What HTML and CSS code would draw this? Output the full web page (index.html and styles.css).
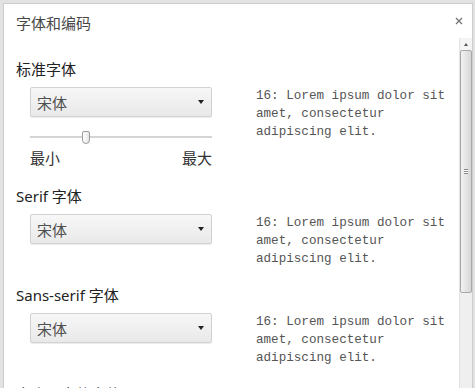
FILE: index.html
```html
<!DOCTYPE html>
<html lang="zh-CN">
<head>
    <meta charset="UTF-8">
    <title>字体和编码</title>
    <link rel="stylesheet" href="styles.css">
</head>
<body>
  <div class="dialog">
    <div class="header">
      <h1 class="title">字体和编码</h1>
      <svg class="close" width="8" height="8" viewBox="0 0 8 8">
        <path d="M1 1 L7 7 M7 1 L1 7" stroke="#777" stroke-width="1.4"/>
      </svg>
    </div>
    <div class="body">
      <div class="content">
        <div class="section">
          <h2 class="label">标准字体</h2>
          <div class="row">
            <div class="controls">
              <div class="select"><span>宋体</span><span class="arrow"></span></div>
              <div class="slider">
                <div class="track"></div>
                <div class="thumb"></div>
              </div>
              <div class="range"><span>最小</span><span>最大</span></div>
            </div>
            <p class="sample">16: Lorem ipsum dolor sit amet, consectetur adipiscing elit.</p>
          </div>
        </div>
        <div class="section">
          <h2 class="label">Serif 字体</h2>
          <div class="row">
            <div class="controls">
              <div class="select"><span>宋体</span><span class="arrow"></span></div>
            </div>
            <p class="sample">16: Lorem ipsum dolor sit amet, consectetur adipiscing elit.</p>
          </div>
        </div>
        <div class="section">
          <h2 class="label">Sans-serif 字体</h2>
          <div class="row">
            <div class="controls">
              <div class="select"><span>宋体</span><span class="arrow"></span></div>
            </div>
            <p class="sample">16: Lorem ipsum dolor sit amet, consectetur adipiscing elit.</p>
          </div>
        </div>
        <div class="section">
          <h2 class="label">宽度固定的字体</h2>
        </div>
      </div>
      <div class="scrollbar">
        <div class="sb-up"><span class="sb-arrow"></span></div>
        <div class="sb-thumb"><span class="grip"></span></div>
        <div class="sb-track"></div>
      </div>
    </div>
  </div>
</body>
</html>
```

FILE: styles.css
```css
html, body {
    margin: 0;
    height: 100%;
    overflow: hidden;
}
body {
    background-color: #e2e2e2;
    font-family: "Noto Sans", "Noto Sans CJK SC", sans-serif;
    color: #333;
}
.dialog {
    box-sizing: border-box;
    margin: 3px 2px 0 3px;
    height: 388px;
    background-color: #fff;
    border: 1px solid #cdcdcd;
    border-bottom: none;
    display: flex;
    flex-direction: column;
}
.header {
    height: 34px;
    box-sizing: border-box;
    padding: 9px 9px 0 12px;
    display: flex;
    justify-content: space-between;
    align-items: flex-start;
}
.title {
    margin: 0;
    font-size: 15px;
    line-height: 20px;
    font-weight: normal;
    color: #484848;
    font-family: "Noto Sans CJK SC", sans-serif;
}
.close {
    margin-top: 4px;
}
.body {
    flex: 1;
    display: flex;
    overflow: hidden;
}
.content {
    flex: 1;
    padding: 21px 0 0 12px;
    overflow: hidden;
}
.section {
    margin-bottom: 17px;
}
.label {
    margin: 0 0 8px 0;
    font-size: 15px;
    line-height: 20px;
    font-weight: normal;
    color: #222;
}
.row {
    display: flex;
    padding-left: 14px;
    gap: 44px;
}
.controls {
    width: 182px;
}
.select {
    box-sizing: border-box;
    height: 30px;
    border: 1px solid #d2d2d2;
    border-radius: 2px;
    background: linear-gradient(#f7f7f7, #e9e9e9);
    box-shadow: 0 1px 1px rgba(0, 0, 0, 0.08);
    display: flex;
    align-items: center;
    justify-content: space-between;
    padding: 0 7px 0 6px;
    font-family: "Noto Sans CJK SC", sans-serif;
    font-size: 15px;
    color: #505050;
}
.arrow {
    width: 0;
    height: 0;
    border-left: 3px solid transparent;
    border-right: 3px solid transparent;
    border-top: 4px solid #222;
}
.slider {
    position: relative;
    height: 13px;
    margin-top: 14px;
}
.track {
    position: absolute;
    left: 0;
    right: 0;
    top: 5px;
    height: 2px;
    background-color: #d4d4d4;
}
.thumb {
    position: absolute;
    left: 52px;
    top: 0;
    width: 6px;
    height: 11px;
    border: 1px solid #9a9a9a;
    border-radius: 2px 2px 4px 4px;
    background: linear-gradient(to right, #fff, #e4e4e4);
}
.range {
    display: flex;
    justify-content: space-between;
    margin: 5px 0 2px 0;
    font-family: "Noto Sans CJK SC", sans-serif;
    font-size: 15px;
    line-height: 18px;
    color: #333;
}
.sample {
    margin: 0;
    width: 200px;
    font-family: "Liberation Mono", monospace;
    font-size: 12.6px;
    line-height: 18px;
    color: #555;
}
.scrollbar {
    width: 12px;
    display: flex;
    flex-direction: column;
    background-color: #efefef;
    border-left: 1px solid #e2e2e2;
}
.sb-up {
    height: 12px;
    display: flex;
    align-items: center;
    justify-content: center;
    background-color: #f4f4f4;
}
.sb-arrow {
    width: 0;
    height: 0;
    border-left: 2px solid transparent;
    border-right: 2px solid transparent;
    border-bottom: 3px solid #555;
}
.sb-thumb {
    box-sizing: border-box;
    height: 243px;
    border: 1px solid #a8a8a8;
    border-radius: 2px;
    background: linear-gradient(to right, #f2f2f2, #d6d6d6);
    display: flex;
    align-items: center;
    justify-content: center;
}
.grip {
    width: 4px;
    height: 5px;
    border-top: 1px solid #888;
    border-bottom: 1px solid #888;
    box-sizing: border-box;
    background: linear-gradient(#fff 1px, #888 1px, #888 2px, #fff 2px);
}
.sb-track {
    flex: 1;
    background-color: #efefef;
}
```
